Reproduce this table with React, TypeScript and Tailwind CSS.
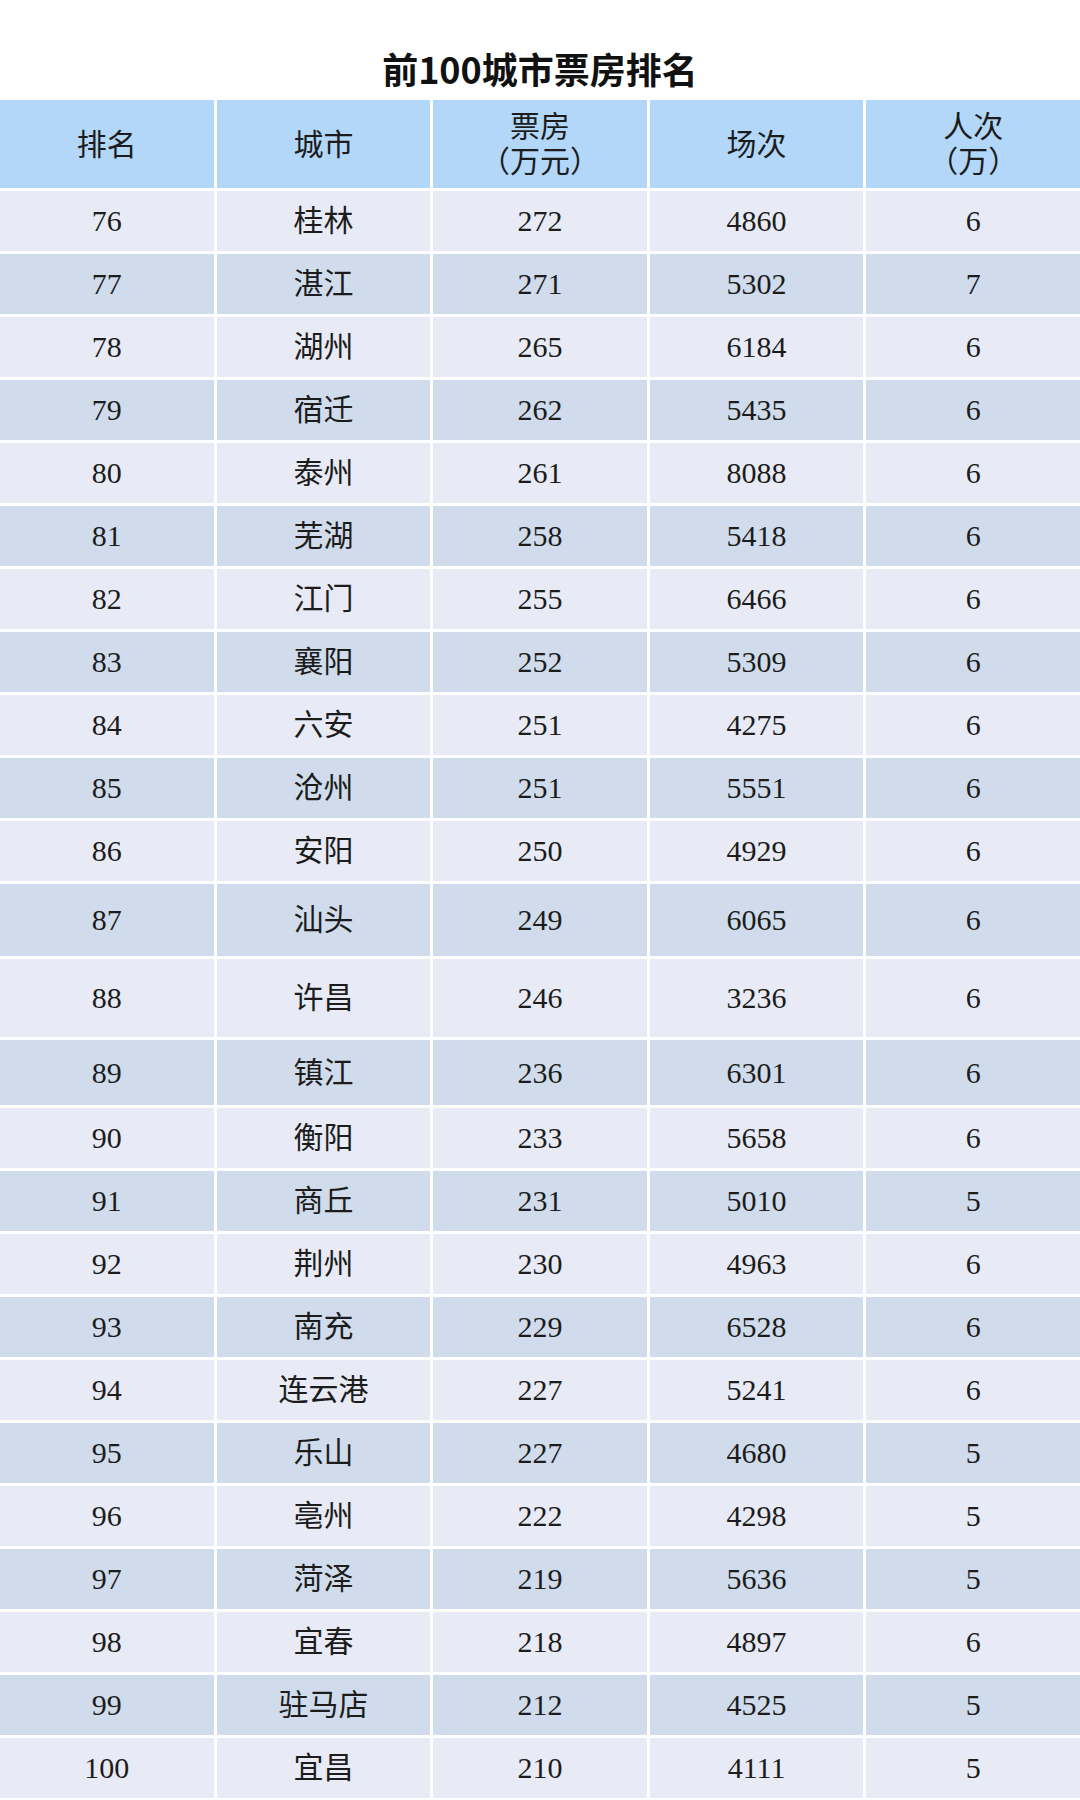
const rows: [string, string, string, string, string][] = [
  ['76', '桂林', '272', '4860', '6'],
  ['77', '湛江', '271', '5302', '7'],
  ['78', '湖州', '265', '6184', '6'],
  ['79', '宿迁', '262', '5435', '6'],
  ['80', '泰州', '261', '8088', '6'],
  ['81', '芜湖', '258', '5418', '6'],
  ['82', '江门', '255', '6466', '6'],
  ['83', '襄阳', '252', '5309', '6'],
  ['84', '六安', '251', '4275', '6'],
  ['85', '沧州', '251', '5551', '6'],
  ['86', '安阳', '250', '4929', '6'],
  ['87', '汕头', '249', '6065', '6'],
  ['88', '许昌', '246', '3236', '6'],
  ['89', '镇江', '236', '6301', '6'],
  ['90', '衡阳', '233', '5658', '6'],
  ['91', '商丘', '231', '5010', '5'],
  ['92', '荆州', '230', '4963', '6'],
  ['93', '南充', '229', '6528', '6'],
  ['94', '连云港', '227', '5241', '6'],
  ['95', '乐山', '227', '4680', '5'],
  ['96', '亳州', '222', '4298', '5'],
  ['97', '菏泽', '219', '5636', '5'],
  ['98', '宜春', '218', '4897', '6'],
  ['99', '驻马店', '212', '4525', '5'],
  ['100', '宜昌', '210', '4111', '5'],
];

// a few rows in the source image are taller than the rest
function rowHeight(rank: string) {
  if (rank === '87') return 'h-[72px]';
  if (rank === '88') return 'h-[78px]';
  if (rank === '89') return 'h-[65px]';
  return 'h-[60px]';
}

const headers = [['排名'], ['城市'], ['票房', '（万元）'], ['场次'], ['人次', '（万）']];

export default function App() {
  return (
    <div className="w-[1080px] min-h-[1800px] bg-white">
      <div className="flex h-[100px] items-center justify-center pt-[36px]">
        <h1
          className="text-[36px] font-bold leading-[44px] text-[#111]"
          style={{ fontFamily: '"Noto Sans CJK SC", "Noto Sans", sans-serif' }}
        >
          前100城市票房排名
        </h1>
      </div>

      <div
        className="flex flex-col gap-[3px] text-[30px] text-[#1c1c1c]"
        style={{ fontFamily: '"Liberation Serif", "Noto Sans CJK SC", serif' }}
      >
        <div className="grid h-[88px] grid-cols-5 gap-[3px]">
          {headers.map((lines, i) => (
            <div key={i} className="flex flex-col items-center justify-center bg-[#b2d7f8] leading-[35px]">
              {lines.map((l) => (
                <span key={l}>{l}</span>
              ))}
            </div>
          ))}
        </div>

        {rows.map((r, idx) => (
          <div key={r[0]} className={`grid grid-cols-5 gap-[3px] ${rowHeight(r[0])}`}>
            {r.map((cell, j) => (
              <div
                key={j}
                className={`flex items-center justify-center leading-none ${
                  idx % 2 === 0 ? 'bg-[#e8ebf5]' : 'bg-[#d0dcec]'
                }`}
              >
                {cell}
              </div>
            ))}
          </div>
        ))}
      </div>
    </div>
  );
}
